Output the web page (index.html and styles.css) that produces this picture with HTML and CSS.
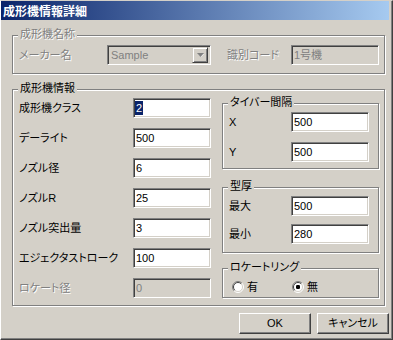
FILE: index.html
```html
<!DOCTYPE html>
<html lang="ja">
<head>
<meta charset="utf-8">
<title>成形機情報詳細</title>
<link rel="stylesheet" href="styles.css">
</head>
<body>
<div class="window">
  <div class="titlebar"><span class="title">成形機情報詳細</span></div>
  <div class="client">
    <div class="group g1">
      <span class="group-title disabled">成形機名称</span>
      <div class="g1-row">
        <span class="label disabled">メーカー名</span>
        <div class="combo">
          <span class="combo-text">Sample</span>
          <span class="combo-btn"><svg width="7" height="5" viewBox="0 0 7 5"><path d="M1 1h6l-3 3z" fill="#fff"/><path d="M0 0h7l-3.5 4z" fill="#808080"/></svg></span>
        </div>
        <span></span>
        <span class="label disabled">識別コード</span>
        <div class="field off wide">1号機</div>
      </div>
    </div>

    <div class="group g2">
      <span class="group-title">成形機情報</span>
      <div class="g2-body">
        <div class="left-col">
          <div class="row"><span class="label lw">成形機クラス</span><div class="field"><span class="sel">2</span></div></div>
          <div class="row"><span class="label lw">デーライト</span><div class="field">500</div></div>
          <div class="row"><span class="label lw">ノズル径</span><div class="field">6</div></div>
          <div class="row"><span class="label lw">ノズルR</span><div class="field">25</div></div>
          <div class="row"><span class="label lw">ノズル突出量</span><div class="field">3</div></div>
          <div class="row"><span class="label lw">エジェクタストローク</span><div class="field">100</div></div>
          <div class="row"><span class="label lw disabled">ロケート径</span><div class="field off">0</div></div>
        </div>
        <div class="right-col">
          <div class="group sub tiebar">
            <span class="group-title">タイバー間隔</span>
            <div class="sub-rows gap10">
              <div class="row"><span class="label sw">X</span><div class="field">500</div></div>
              <div class="row"><span class="label sw">Y</span><div class="field">500</div></div>
            </div>
          </div>
          <div class="group sub mold">
            <span class="group-title">型厚</span>
            <div class="sub-rows gap8">
              <div class="row"><span class="label sw">最大</span><div class="field">500</div></div>
              <div class="row"><span class="label sw">最小</span><div class="field">280</div></div>
            </div>
          </div>
          <div class="group sub ring">
            <span class="group-title">ロケートリング</span>
            <div class="radios">
              <label class="radio first">
                <svg width="12" height="12" viewBox="0 0 12 12"><circle cx="6" cy="6" r="5" fill="#fff"/><path d="M9.9 2.1A5.5 5.5 0 0 0 2.1 9.9" stroke="#808080" fill="none"/><path d="M9.9 2.1A5.5 5.5 0 0 1 2.1 9.9" stroke="#fff" fill="none"/><path d="M9.2 2.8A4.5 4.5 0 0 0 2.8 9.2" stroke="#404040" fill="none"/><path d="M9.2 2.8A4.5 4.5 0 0 1 2.8 9.2" stroke="#D4D0C8" fill="none"/></svg>
                <span>有</span>
              </label>
              <label class="radio">
                <svg width="12" height="12" viewBox="0 0 12 12"><circle cx="6" cy="6" r="5" fill="#fff"/><path d="M9.9 2.1A5.5 5.5 0 0 0 2.1 9.9" stroke="#808080" fill="none"/><path d="M9.9 2.1A5.5 5.5 0 0 1 2.1 9.9" stroke="#fff" fill="none"/><path d="M9.2 2.8A4.5 4.5 0 0 0 2.8 9.2" stroke="#404040" fill="none"/><path d="M9.2 2.8A4.5 4.5 0 0 1 2.8 9.2" stroke="#D4D0C8" fill="none"/><rect x="4" y="4" width="4" height="4" rx="1.2" fill="#000"/></svg>
                <span>無</span>
              </label>
            </div>
          </div>
        </div>
      </div>
    </div>

    <div class="buttons">
      <button class="btn">OK</button>
      <button class="btn">キャンセル</button>
    </div>
  </div>
</div>
</body>
</html>
```

FILE: styles.css
```css
* { box-sizing: border-box; }
html, body { margin: 0; padding: 0; background: #D4D0C8; }
body {
  font-family: "Liberation Sans", "Noto Sans CJK JP", sans-serif;
  font-size: 11px;
  color: #000;
  font-feature-settings: "palt";
}
.window {
  width: 393px;
  height: 340px;
  background: #D4D0C8;
  border: 1px solid;
  border-color: #D4D0C8 #404040 #404040 #FFFFFF;
  box-shadow: inset -1px -1px 0 #808080;
}
.titlebar {
  height: 19px;
  margin-right: 3px;
  background: linear-gradient(to right, #0A246A, #A6CAF0);
  display: flex;
  align-items: center;
  padding-left: 2px;
}
.title {
  color: #fff;
  font-family: "Noto Sans CJK JP", sans-serif;
  font-weight: bold;
  font-size: 12px;
  line-height: 19px;
  font-feature-settings: normal;
}
.client {
  padding: 0 3px 0 11px;
}
.group {
  position: relative;
  border: 1px solid #808080;
  box-shadow: inset 1px 1px 0 #fff, 1px 1px 0 #fff;
  margin-right: 4px;
}
.group-title {
  position: absolute;
  top: -8px;
  left: 5px;
  padding: 0 2px;
  background: #D4D0C8;
  line-height: 13px;
  white-space: nowrap;
}
.disabled {
  color: #808080;
  text-shadow: 1px 1px 0 #fff;
}
.g1 {
  margin-top: 15px;
  padding: 9px 3px 8px 6px;
}
.g1-row {
  display: grid;
  grid-template-columns: 88px 104px 16px 64px 88px;
  align-items: center;
  height: 20px;
}
.label {
  line-height: 13px;
  white-space: nowrap;
}
.field {
  height: 20px;
  width: 78px;
  background: #fff;
  border: 1px solid;
  border-color: #808080 #fff #fff #808080;
  box-shadow: inset 1px 1px 0 #404040, inset -1px -1px 0 #D4D0C8;
  padding-left: 2px;
  line-height: 18px;
  white-space: nowrap;
  overflow: hidden;
}
.field.wide { width: 88px; }
.field.off { background: #D4D0C8; color: #808080; }
.sel {
  display: inline-block;
  margin-left: -1px;
  padding: 0 1px;
  background: #0A246A;
  color: #fff;
  line-height: 14px;
  vertical-align: middle;
  position: relative;
  top: -1px;
}
.combo {
  height: 20px;
  width: 104px;
  background: #D4D0C8;
  color: #808080;
  border: 1px solid;
  border-color: #808080 #fff #fff #808080;
  box-shadow: inset 1px 1px 0 #404040, inset -1px -1px 0 #D4D0C8;
  display: flex;
  align-items: center;
  justify-content: space-between;
  padding: 2px 2px 2px 3px;
}
.combo-text { line-height: 16px; }
.combo-btn {
  width: 16px;
  height: 16px;
  background: #D4D0C8;
  border: 1px solid;
  border-color: #D4D0C8 #404040 #404040 #D4D0C8;
  box-shadow: inset 1px 1px 0 #fff, inset -1px -1px 0 #808080;
  display: flex;
  align-items: center;
  justify-content: center;
}
.combo-btn svg { display: block; margin-top: 1px; }
.g2 {
  margin-top: 15px;
  padding: 8px 3px 7px 6px;
}
.g2-body {
  display: flex;
  align-items: flex-start;
}
.left-col {
  display: flex;
  flex-direction: column;
  gap: 10px;
  width: 192px;
}
.row {
  display: flex;
  align-items: center;
  height: 20px;
}
.lw { width: 114px; }
.sw { width: 62px; }
.right-col {
  margin-left: 11px;
  margin-top: 5px;
  width: 157px;
  display: flex;
  flex-direction: column;
}
.sub { margin-right: 0; }
.sub-rows { display: flex; flex-direction: column; }
.gap10 { gap: 10px; }
.gap8 { gap: 8px; }
.tiebar { padding: 8px 0 6px 6px; }
.mold { margin-top: 18px; padding: 8px 0 8px 6px; }
.ring { margin-top: 15px; padding: 12px 0 4px 9px; }
.radios { display: flex; height: 12px; align-items: center; }
.radio {
  display: flex;
  align-items: center;
  gap: 3px;
  line-height: 13px;
}
.radio svg { display: block; flex: none; }
.radio.first { width: 60px; }
.buttons {
  display: flex;
  justify-content: flex-end;
  gap: 6px;
  margin-top: 7px;
}
.btn {
  width: 72px;
  height: 21px;
  margin: 0;
  padding: 0;
  font: inherit;
  font-size: 11px;
  color: #000;
  background: #D4D0C8;
  border: 1px solid;
  border-color: #fff #404040 #404040 #fff;
  box-shadow: inset -1px -1px 0 #808080;
  line-height: 19px;
}
```
